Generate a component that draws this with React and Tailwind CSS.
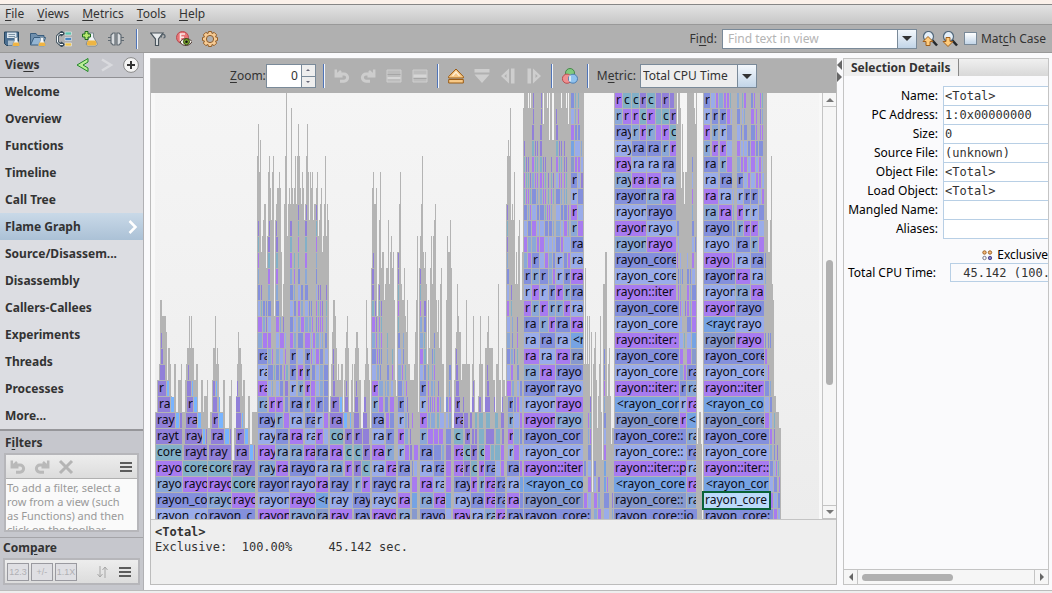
import React from "react";

const LEFT = 151;
const TOP = 93;
const ROW = 16;
const END = 519;

const COLORS = {
  a: "#8490dc",
  b: "#9aacea",
  c: "#a87bf0",
  d: "#82b0c8",
  e: "#8ba8d8",
  f: "#9180d9",
  g: "#76a3e3",
  h: "#78b4ff",
  i: "#8799ce",
};

const LABELS = {
  A: "rayon_core::job",
  B: "rayon_core::job",
  C: "rayon::iter::plumbing",
  D: "core::ops",
  E: "rayon_core::registry",
  F: "raytracer",
  G: "<rayon_core",
  I: "rayon_core::latch",
};

// Keeps only the letters that start inside a frame of the given width.
const fit = (label, width) => {
  let used = 1;
  let n = 0;
  while (n < label.length && used + 2 < width) {
    used += { r: 5, t: 4, i: 3, ":": 3, l: 3, _: 5, c: 6 }[label[n]] || 7;
    n += 1;
  }
  return label.slice(0, n);
};

// Stack outline: "x:row" starts a run whose top frame sits in that row.
const OUTLINE =
  "155:20 157:18 159:17 160:13 162:14 166:15 167:18 168:16 170:17 171:19 172:20 174:17 176:20 178:18 181:17 182:20 " +
  "185:18 186:17 187:16 189:14 190:16 191:14 192:16 194:18 196:17 198:20 201:18 203:20 204:19 207:18 208:21 " +
  "210:20 212:18 213:16 215:14 216:17 217:16 218:17 219:20 223:18 225:21 229:19 231:18 232:23 234:21 " +
  "236:19 237:17 238:15 239:16 241:17 242:19 243:18 245:21 248:19 250:22 252:20 " +
  "257:4 258:2 259:5 260:3 261:10 262:9 263:8 264:7 266:11 267:9 268:5 269:4 270:6 271:8 272:5 273:4 274:14 275:8 276:7 277:6 279:5 280:6 281:10 282:14 283:12 284:7 285:4 286:0 287:9 288:7 289:6 290:7 291:1 292:6 293:7 294:6 295:4 296:7 297:4 298:2 299:4 300:6 301:7 302:5 303:6 304:8 305:7 306:4 307:2 308:5 309:8 310:5 311:6 312:5 313:8 314:7 316:6 317:5 318:9 319:8 320:7 321:6 322:10 323:9 324:7 325:4 326:9 327:7 328:8 329:20 " +
  "330:19 331:17 332:15 333:13 335:14 336:16 337:18 338:17 339:18 341:17 343:20 344:18 345:16 346:15 347:14 348:16 349:20 351:18 352:17 353:20 354:17 355:16 356:15 358:16 359:18 361:21 363:20 364:18 365:17 366:13 367:16 368:17 369:18 370:21 " +
  "371:11 372:6 373:5 374:7 376:6 377:14 378:12 379:8 380:5 381:11 382:10 384:13 385:12 386:11 388:8 389:12 390:10 391:9 392:11 393:10 394:13 395:18 396:19 397:10 399:7 400:5 401:12 402:13 404:11 405:14 406:15 407:13 408:17 410:18 414:17 415:15 416:13 417:9 418:20 419:11 420:9 421:7 422:4 423:10 424:11 425:10 426:12 427:17 428:13 429:16 430:11 431:9 432:12 433:9 434:8 435:7 436:13 437:15 438:13 439:16 440:12 441:11 442:17 444:20 446:13 447:9 448:10 450:8 451:11 452:21 454:18 455:16 456:15 457:12 458:14 459:15 461:18 462:17 466:13 467:17 470:20 472:17 473:14 474:18 475:20 478:19 479:17 480:14 481:17 483:20 485:16 487:15 488:14 489:16 493:18 495:20 496:17 498:12 499:18 501:20 502:16 503:18 505:19 " +
  "506:7 507:4 508:3 509:4 510:1 511:8 512:7 513:8 514:5 515:12 516:10 517:12 518:9 519:8 520:13 522:10 523:1 524:0 528:1 529:0 530:1 531:0 543:2 544:0 547:1 548:0 549:3 550:0 552:3 554:0 561:1 562:0 566:1 567:0 568:2 569:0 " +
  "584:17 585:11 586:17 587:14 588:17 589:14 590:19 591:15 592:25 593:17 594:16 595:15 596:18 597:21 598:19 599:17 600:14 601:20 602:23 603:12 605:10 607:19 608:17 609:16 610:19 611:22 612:21 " +
  "614:0 677:2 678:0 680:1 681:6 682:2 683:5 684:7 685:5 687:0 694:1 695:2 696:0 697:22 698:21 699:20 701:22 702:27 703:0 767:8 768:10 770:8 771:4 772:12 773:13 774:19 776:20 779:21 781:27";

// Frames per row: "x-endColour"; an upper-case colour letter marks a labelled frame.
const FRAMES = [
  "533-534f 541-542f 571-574a 575-576d 578-579d 615-622C 623-631D 632-639D 640-646F 647-655D 656-661f 662-669F 670-674f 704-710A 711-715b 716-718c 719-723e 724-726c 727-729c 730-731d 737-739e 742-743d 744-746c 751-753a 754-755c 760-761c 762-763d",
  "533-534f 541-542f 556-557f 571-574b 575-576e 578-579c 615-622E 623-631C 632-639C 640-646D 647-655C 656-661d 662-669D 670-676F 704-710B 712-718A 720-726A 727-730c 731-732b 737-740a 742-743b 744-745e 751-754c 756-757c 760-761f 762-763e",
  "532-534f 540-542f 556-558f 571-574c 575-577a 578-580a 615-631A 632-639E 640-646C 647-655E 656-661c 662-669C 670-676D 704-710C 712-718E 720-726B 727-732a 737-740b 741-742a 744-747a 751-755a 756-757c 760-761c 762-763c",
  "524-525f 532-534d 535-536f 537-538f 540-542f 556-558d 559-560f 561-562f 564-565f 571-574g 575-580b 581-582e 615-631B 632-646A 647-661A 662-669E 670-676C 704-710E 712-718C 720-726C 727-732b 737-740c 741-743b 744-747b 748-750a 751-755c 756-758a 759-763a",
  "524-525d 526-527f 528-529f 532-534c 535-536d 537-538d 540-542d 543-544f 545-546f 551-552f 556-558c 559-560d 561-562d 564-565f 566-567f 571-574i 575-577c 578-580c 581-583b 615-631C 632-646B 647-661B 662-676A 692-693a 704-718A 720-726E 727-732c 737-740e 741-743c 744-747c 748-750b 751-755c 756-758b 759-761c 762-763b",
  "524-525c 526-527d 528-529d 530-531f 532-534e 535-536c 537-538c 540-542c 543-544c 545-546d 548-549f 551-552d 553-554f 556-558b 559-560c 561-562c 564-565c 566-567d 571-577A 578-580b 581-583f 615-631E 632-646C 647-661C 662-676B 692-693b 704-718B 720-732A 737-743A 744-747b 748-750c 751-755b 756-758c 759-761c 762-764b",
  "524-525d 526-527c 528-529c 530-531d 532-536a 537-538e 540-542e 543-544c 545-546c 548-549d 551-552c 553-554d 556-560a 561-562e 564-565e 566-567d 571-577B 578-583a 615-646A 647-661E 662-676C 692-693c 704-718C 719-732B 733-734b 737-743B 744-750A 751-758A 759-761b 762-764c",
  "298-299f 306-307f 316-317f 507-508f 524-527a 528-529e 530-531c 532-536b 537-539a 540-544a 545-546d 547-548c 549-550c 551-552e 556-560b 561-563a 564-567a 568-569c 571-577C 578-583b 615-646B 647-676A 692-693e 704-718E 719-732C 733-734e 737-743C 744-750B 751-758B 759-764a",
  "258-259f 269-270f 276-277f 290-292f 298-299d 305-307f 316-317d 507-508d 524-527b 528-531a 532-536c 537-539b 540-544b 545-548a 549-552a 553-554e 556-560e 561-563b 564-567c 568-569e 571-577E 578-583c 615-646C 647-676B 677-679a 692-694a 704-732A 733-735a 737-743E 744-750C 751-758C 759-764b",
  "258-259d 268-270f 276-278f 290-292d 298-299c 305-307d 316-317c 507-508f 524-527c 528-531e 532-536e 537-539c 540-544c 545-548b 549-552b 553-555b 556-560a 561-563c 564-570b 571-583A 615-646E 647-676C 678-679b 692-694b 695-696a 704-732B 733-735b 736-750A 751-758E 759-764c",
  "258-259c 268-270d 276-278d 290-292c 294-295d 298-299d 305-307c 316-317e 373-374f 398-399f 507-508e 524-527e 528-531c 532-539A 540-544b 545-548c 549-552e 553-555a 556-563B 564-567a 568-570c 571-583B 615-676A 677-678c 680-681b 687-688b 692-694c 704-732C 733-735c 736-750B 751-764A 765-766a",
  "258-259e 268-270c 276-278c 290-292e 294-295c 298-300a 305-307e 316-317a 372-374f 398-399f 420-421f 507-509a 524-531A 532-539E 540-548A 549-552e 553-555c 556-563B 564-570A 571-583C 615-676B 678-679a 680-681e 682-683a 687-689a 690-691a 692-695b 704-735A 736-750C 751-764B 765-766e",
  "258-260a 261-262f 268-270e 276-278e 290-293a 294-295e 298-300b 301-303a 305-308a 316-317b 318-319f 320-321f 326-327f 372-374f 379-380f 398-399d 420-421d 507-509b 511-512f 524-531B 532-539C 540-548B 549-555A 556-563C 564-570E 571-583A 615-676C 678-679c 680-681e 687-689c 690-691e 692-696a 704-735B 736-750E 751-764C 765-766b",
  "258-260b 261-262d 263-265a 266-267a 268-271a 276-279a 290-293b 294-296a 298-300c 301-303e 305-308b 309-310a 311-312a 316-317c 318-319d 320-321c 322-323f 326-327d 372-374d 375-376f 379-380d 381-382f 398-399c 420-421c 424-426f 507-509c 511-512d 524-531C 532-539E 540-548C 549-555E 556-563E 564-570C 571-583B 615-679A 680-681c 682-683b 685-686f 687-689c 690-691e 692-696c 704-735C 736-764A",
  "258-262c 263-265e 266-267f 268-271b 276-279c 280-281e 283-284f 290-293a 294-296b 298-300e 301-304c 305-308e 309-311e 312-313c 316-317a 318-319c 320-321c 322-323c 326-327e 372-375c 376-377f 379-380c 381-382d 398-399d 420-422e 424-426a 507-510b 512-513e 517-518f 524-539A 540-548E 549-555C 556-570A 571-583C 615-679B 680-682b 687-691a 692-696c 704-735G 736-764B",
  "161-162f 258-262e 263-267c 268-271c 276-279b 280-284c 285-286b 290-293c 294-296e 298-303a 305-310c 311-312b 313-315c 316-319e 320-321b 322-323e 325-327a 372-375e 376-377c 379-380e 381-382c 387-388d 398-400a 403-404e 420-423e 424-425d 434-435a 507-510e 512-513a 517-518c 524-539B 540-555A 556-570B 571-583G 615-679C 680-683b 684-685d 687-691b 692-696g 704-735I 736-764C 765-766a 768-769a 770-771a",
  "161-163f 258-267A 268-271e 272-273c 276-279e 280-283b 285-286c 290-296A 298-303b 305-310A 311-312c 313-315b 316-319c 320-323a 325-328b 333-334f 372-376a 377-378c 379-380a 381-382a 387-388e 392-393d 398-401b 403-404a 420-423c 424-426d 432-433a 434-435d 456-457f 507-510a 511-513e 514-515f 517-518d 524-539C 540-555B 556-570C 571-583I 604-605a 615-679A 680-683c 687-691c 692-696i 704-764A 765-767c",
  "160-165f 188-189f 258-267B 268-273a 274-275d 276-279a 280-282a 284-285c 286-288d 290-296A 298-303C 305-310A 312-315a 316-319b 320-323e 324-328a 333-334f 372-376b 377-379e 380-381a 387-389a 392-393c 398-401e 402-403c 405-406d 420-423b 424-426a 428-429d 432-433e 434-435c 449-451a 456-458f 487-488f 507-510b 511-513c 517-519a 524-539E 540-555C 556-583A 604-605a 615-679B 680-683e 684-686c 687-696A 704-764B 765-767b 768-769c",
  "158-166F 167-169h 187-191f 192-193h 213-215f 216-217h 237-238f 258-267C 268-271b 272-273e 276-279b 280-283a 285-288f 290-296B 298-303E 305-310C 311-315c 316-319b 320-323e 324-328a 333-335f 346-347f 356-357f 372-378C 379-383e 385-386e 387-389e 391-393b 398-402a 403-404b 406-407c 420-426A 428-429c 431-433e 434-435e 438-439f 449-450e 456-459f 473-474f 487-489f 507-511c 512-514e 517-519b 520-522a 524-555A 556-583B 604-605c 615-679C 680-686A 687-696E 704-764C 765-769a 770-771e",
  "158-170F 171-174h 187-193F 194-197h 213-217f 219-220h 236-240f 258-267E 269-275C 276-283C 285-288a 290-303A 305-310E 311-315c 316-323A 324-328a 331-339F 340-342h 345-348f 355-358f 364-366f 372-378E 379-383c 385-388a 390-394c 398-404A 405-406b 407-408f 420-426B 428-429c 430-431a 432-433c 434-435c 437-439c 440-441e 446-448a 449-451c 455-460F 463-464f 472-474f 479-481f 485-490f 494-495f 502-503f 508-513A 514-516a 517-519c 520-522b 524-555B 556-583C 590-591f 604-605e 615-679G 680-686B 687-696C 704-764G 765-769b 770-772a",
  "156-175F 176-179h 180-182f 186-197F 198-201h 212-218F 219-223h 236-241f 242-243h 258-275A 276-283E 284-289c 290-303B 305-315A 316-323B 324-328c 330-343F 344-347h 350-351h 354-359f 363-367f 372-384A 386-389c 390-394a 398-404B 405-407e 408-409f 412-413c 420-427C 428-430e 431-435e 437-439d 440-444b 446-448b 449-451e 454-463F 464-468f 470-472f 475-477d 479-483d 486-490d 495-498d 501-504f 508-513E 514-519b 520-522c 524-555C 556-583E 588-589c 590-591d 604-606a 615-679I 680-686C 687-696G 704-764I 765-769c 770-772b 774-775d",
  "156-182F 185-202F 203-205h 206-207f 211-224F 225-229h 230-231f 236-244F 245-248h 258-275B 276-288A 290-303C 305-315B 316-323C 324-328b 330-343D 345-352F 354-362F 363-369f 372-384B 386-394A 398-404C 405-408e 410-411f 420-427E 428-433c 434-438c 439-443c 446-451a 454-463D 465-470F 472-474f 475-477f 479-484d 486-494f 496-500d 502-504f 508-513C 514-519e 520-522a 524-583A 588-589e 590-591c 604-606b 614-686A 687-696E 704-769A 770-772c 774-775f",
  "156-182D 184-207F 209-231F 235-249F 250-253h 254-255f 258-275C 276-288E 290-303E 304-315C 316-328A 330-343C 345-352D 354-362D 363-370F 372-385C 386-394E 398-404B 405-409c 410-412f 414-418c 420-433A 434-441a 442-444e 446-451f 454-463C 464-470D 471-477F 479-484D 485-490c 491-494d 495-500d 501-504c 508-513B 514-519c 520-523b 524-583B 588-591a 604-606c 614-686B 687-696A 704-769B 770-772e 774-775a 777-778f",
  "156-182C 183-207D 208-231D 233-255F 258-275E 276-288C 290-315A 316-328B 330-343E 345-352C 354-361F 362-370D 372-385B 386-396C 398-410A 412-413a 414-417b 420-433B 434-444A 446-451c 454-463C 464-470F 471-477D 479-484C 485-495A 496-500b 501-504c 507-519A 520-522c 524-583C 584-586a 588-591b 594-596a 604-606g 614-686C 687-696B 704-769C 770-773a 774-775b 776-777c 778-779d",
  "156-182E 183-207C 208-231C 232-255D 258-289A 290-315B 316-328C 330-352A 354-361E 362-370C 372-396A 398-410B 412-417c 420-433C 434-444B 446-451c 454-470A 471-477C 479-484E 485-495C 496-505A 507-519B 520-523g 524-583G 588-591c 594-596b 598-600f 604-606g 607-608c 614-686G 687-696C 704-769G 770-773b 774-777a 779-780c",
  "156-207A 208-231E 232-255C 258-289B 290-315C 316-328G 330-352B 353-370A 372-396B 398-410C 412-417g 420-433E 434-445C 446-451g 454-470B 471-484A 485-495C 496-505A 507-519C 520-523a 524-583I 584-587c 588-591b 594-597c 598-600e 604-609a 612-613f 614-686I 687-696E 771-773c 774-777b 778-780a",
  "156-207B 208-255A 258-289C 290-315E 316-328I 330-352C 354-370A 372-396C 398-410E 412-417i 420-445A 446-451b 453-470C 471-484B 485-495E 496-505C 507-523A 524-591A 594-597e 598-601c 604-609b 612-613e 614-697A 704-773A 774-777c 778-780b",
];

function FlameGraph() {
  const runs = OUTLINE.split(" ").map((s) => s.split(":").map(Number));
  return (
    <svg width="671" height="426" viewBox="151 93 671 426" role="img" aria-label="Flame Graph" className="block shrink-0">
      <defs>
        <linearGradient id="paper" x1="0" y1="0" x2="0" y2="1">
          <stop offset="0" stopColor="#f5f5f5" />
          <stop offset="1" stopColor="#ececec" />
        </linearGradient>
      </defs>
      <rect x={LEFT} y={TOP} width="671" height="426" fill="#f8f8f8" />
      <rect x="155" y={TOP} width="664" height="426" fill="url(#paper)" />
      <g fill="#b4b4b4" shapeRendering="crispEdges">
        {runs.slice(0, -1).map(([x, row], i) => {
          const y = TOP - 1 + row * ROW;
          return row < 27 ? <rect key={x} x={x} y={y} width={runs[i + 1][0] - x} height={END - y} /> : null;
        })}
      </g>
      {FRAMES.map((line, row) =>
        line.split(" ").map((s) => {
          const [, x, end, code] = s.match(/(\d+)-(\d+)(\w)/);
          const y = TOP + row * ROW;
          const w = end - x;
          return (
            <svg key={row + s} x={x} y={y} width={w} height="15">
              <rect width={w} height="15" fill={COLORS[code.toLowerCase()]} />
              {LABELS[code] && (
                <text x={code === "G" ? 2 : 1} y="11" fontSize="12" fill="#0c0c14">
                  {fit(LABELS[code], w)}
                </text>
              )}
            </svg>
          );
        })
      )}
      <rect x="703" y="492" width="67" height="17" fill="#bcdafa" stroke="#0a6238" strokeWidth="2" />
      <svg x="704" y="493" width="65" height="15">
        <text x="1" y="11" fontSize="12" fill="#0c0c14">rayon_core</text>
      </svg>
    </svg>
  );
}

const Icon = ({ children }) => (
  <svg width="16" height="16" viewBox="0 0 16 16" fill="none" className="block shrink-0">
    {children}
  </svg>
);

const Flask = ({ x = 8, y = 6 }) => (
  <g transform={`translate(${x} ${y})`}>
    <path d="M2.5 .5h3v3l2 3.5c.6 1.500-.3 2.500-1.500 2.500h-4c-1.200 0-2-1-1.500-2.500l2-3.500z" fill="#f2f6fa" stroke="#8899a6" strokeWidth=".8" />
    <path d="M1.500 5.500h5l1 2c.2 1-.5 1.500-1.200 1.500H1.800C.9 9 .5 8.300.8 7.500z" fill="#f0b443" />
  </g>
);
const SaveIcon = () => (
  <Icon>
    <path d="M.5 1h14v13.500H2.500l-2-2z" fill="#4b6f91" stroke="#28465f" />
    <path d="M3 1.500h9.500V7H3z" fill="#dce6ee" />
    <path d="M4.500 3.500h6.500M4.500 5.500h6.500" stroke="#7d94a6" />
    <path d="M4 9.500h6v5H4z" fill="#a9bccb" />
    <Flask />
  </Icon>
);
const OpenIcon = () => (
  <Icon>
    <path d="M.5 14V2.500h5.500l1.500 2H14V7" fill="#6f8fad" stroke="#3a5d7d" />
    <path d="M.5 14 4 6.500h11.500L13 14z" fill="#94b5d3" stroke="#3a5d7d" />
    <Flask y={6} />
  </Icon>
);
const ConnectIcon = () => (
  <Icon>
    <path d="M7 2.500H4L1.500 5v6L4 13.500h3M4.500 .5l3 2-3 2M4.500 11.500l3 2-3 2" stroke="#394c59" strokeWidth="2.600" />
    <path d="M7 2.500H4L1.500 5v6L4 13.500h3" stroke="#f5f8fa" strokeWidth="1" />
    <path d="M9 1h6.500v3H9z" fill="#5bc1ad" stroke="#eee" strokeWidth=".6" />
    <path d="M9 6.500h6.500v3H9z" fill="#4a86c0" stroke="#eee" strokeWidth=".6" />
    <path d="M9 12h6.500v3H9z" fill="#edc24a" stroke="#eee" strokeWidth=".6" />
  </Icon>
);
const NewIcon = () => (
  <Icon>
    <path d="M7.500 2h4v4l3.500 6c.6 2-.5 3-2 3H6.500c-2 0-2.500-1.500-2-3l3-6z" fill="#eef2f5" stroke="#7d8a93" />
    <path d="M6 9.500h7.500l1 2.500c.4 1.500-.3 2.500-1.500 2.500H6.500C5 14.500 4.600 13.500 5 12z" fill="#edb544" />
    <path d="M3 .5h3V3h2.500v3H6v2.500H3V6H.5V3H3z" fill="#b6e86f" stroke="#1d6a1d" />
  </Icon>
);
const CompareIcon = () => (
  <Icon>
    <path d="M7 2v12H5l-2-2V4l2-2zM9 2v12h2l2-2V4l-2-2zM0 6.500h3M0 9.500h3M13 6.500h3M13 9.500h3" fill="#d9dcdf" stroke="#606a72" strokeWidth="1.200" />
  </Icon>
);
const FilterIcon = () => (
  <Icon>
    <path d="M.5 2H13L8.500 8v6.500h-3V8z" fill="#e8ebed" stroke="#4a555d" strokeWidth="1.200" />
    <path d="M11.500 6.500c-1.500-3 3-4.500 3.500-1.500.2 1.500-1 2-1.500 1.500" stroke="#59656e" strokeWidth="1.400" />
  </Icon>
);
const EyeIcon = () => (
  <Icon>
    <circle cx="6.500" cy="6.500" r="6" fill="#e77476" stroke="#b94b50" />
    <path d="M4.500 10V3h4.500M4.500 6.300h3.500" stroke="#fbe6e6" strokeWidth="1.600" />
    <path d="M4 11c3-4.500 9-4.500 12-.5-2 5-9.500 5.500-12 .5z" fill="#f4f4ec" stroke="#4c3430" />
    <circle cx="10.500" cy="10.700" r="3" fill="#7da832" stroke="#38500f" />
    <circle cx="10.500" cy="10.700" r="1.300" fill="#111" />
  </Icon>
);
const GearIcon = () => (
  <Icon>
    <path d="M6.500 .5h3l.5 2 2.200-1.100 2.400 2.400L13.500 6l2 .5v3l-2 .5 1.100 2.200-2.400 2.400L10 13.500l-.5 2h-3l-.5-2-2.200 1.100-2.400-2.400L2.500 10l-2-.5v-3l2-.5-1.100-2.200 2.400-2.400L6 2.500z" fill="#f6cb94" stroke="#925e29" strokeLinejoin="round" />
    <circle cx="8" cy="8" r="3.600" fill="#b0b0b0" stroke="#925e29" />
  </Icon>
);
const FindIcon = ({ down }) => (
  <Icon>
    <path d="m10 9 5 5.500" stroke="#24282c" strokeWidth="2.500" />
    <circle cx="6.500" cy="5.500" r="5" fill="#e4eff9" stroke="#53687a" strokeWidth="1.200" />
    <path d={down ? "M4 6.500h4v4h3L6 15.500 1 10.500h3z" : "M4 14.500h4v-4h3L6 5.500 1 10.500h3z"} fill="#ffcc7d" stroke="#a1601c" />
  </Icon>
);
const UndoIcon = ({ redo, tone = "#cdcdcd" }) => (
  <Icon>
    <g transform={redo ? "translate(16 0) scale(-1 1)" : undefined} stroke={tone}>
      <path d="M3.500 6H10a3.600 3.600 0 0 1 0 7.200H6" strokeWidth="3" />
      <path d="M1.800 1.500v6.700h6.700M2 8l5-5" strokeWidth="2.500" />
    </g>
  </Icon>
);
const ListIcon = ({ low }) => (
  <Icon>
    <path d="M1 2h14v12H1z" fill="#bdbdbd" stroke="#cecece" />
    <path d={low ? "M1.500 6.500h13v3h-13z" : "M1.500 9h13v2h-13z"} fill="#d6d6d6" />
    <path d={low ? "M1.500 10.500h13" : "M1.500 6.500h13"} stroke="#a6a6a6" />
  </Icon>
);
const UpIcon = () => (
  <Icon>
    <path d="m8 1 7.300 7.500v1.500H.7V8.500z" fill="#f7c987" stroke="#9a5c15" />
    <path d="m4.500 8 3.500-4 3.500 4" stroke="#fff1d8" strokeWidth="1.200" />
    <path d="M.7 11.500h14.600v3.500H.7z" fill="#f7c987" stroke="#9a5c15" />
  </Icon>
);
const NavIcon = ({ kind }) => (
  <Icon>
    {kind === "down" && <path d="M.5 1h15v3.500H.5zM.5 6.500h15L8 15z" fill="#cecece" />}
    {kind === "left" && <path d="M11 .5h3.500v15H11zM9 .5v15L1 8zM6.500 6v4L4.300 8z" fill="#cecece" fillRule="evenodd" />}
    {kind === "right" && <path d="M1.500 .5H5v15H1.500zM7 .5v15L15 8zM9.500 6v4l2.200-2z" fill="#cecece" fillRule="evenodd" />}
  </Icon>
);
const ColorsIcon = () => (
  <Icon>
    <circle cx="8" cy="5" r="4.500" fill="#80c97f" stroke="#46884a" />
    <circle cx="5" cy="10.700" r="4.600" fill="#ef9090" stroke="#b84e52" />
    <circle cx="11" cy="10.700" r="4.500" fill="#90c2ee" stroke="#4e7db0" />
    <path d="M8 7.500v6" stroke="#f6f6f6" strokeWidth="1.500" />
  </Icon>
);
const Bars = () => (
  <svg width="14" height="12" viewBox="0 0 14 12" className="block">
    <path d="M1 2h12M1 6h12M1 10h12" stroke="#5c5c5c" strokeWidth="2" />
  </svg>
);
const Tri = ({ dir = "down", small }) => {
  const d = { down: "M0 0h10L5 5z", up: "M0 5h10L5 0z", left: "M5 0v10L0 5z", right: "M0 0v10l5-5z" }[dir];
  const tall = dir === "left" || dir === "right";
  const long = small ? 8 : 10;
  const short = small ? 4 : 5;
  return (
    <svg width={tall ? short : long} height={tall ? long : short} viewBox={tall ? "0 0 5 10" : "0 0 10 5"} className="block fill-current">
      <path d={d} />
    </svg>
  );
};

const Btn = ({ label, className = "", children }) => (
  <button type="button" aria-label={label} className={`flex shrink-0 items-center justify-center ${className}`}>
    {children}
  </button>
);
const Sep = ({ margin = "mx-[9px]" }) => <div className={`h-6 w-[2px] shrink-0 border-l border-[#4f74b8] bg-[#f2f6fc] ${margin}`} />;
const U = ({ children }) => <span className="underline underline-offset-2">{children}</span>;

const VIEWS = ["Welcome", "Overview", "Functions", "Timeline", "Call Tree", "Flame Graph", "Source/Disassem...", "Disassembly", "Callers-Callees", "Experiments", "Threads", "Processes", "More..."];
const DETAILS = [
  ["Name:", "<Total>"],
  ["PC Address:", "1:0x00000000"],
  ["Size:", "0"],
  ["Source File:", "(unknown)"],
  ["Object File:", "<Total>"],
  ["Load Object:", "<Total>"],
  ["Mangled Name:", ""],
  ["Aliases:", ""],
];

function Sidebar() {
  return (
    <aside className="flex w-36 shrink-0 flex-col border-r border-[#b0b0b4] bg-[#c6c7cd] font-bold">
      <div className="flex h-[25px] shrink-0 items-center border-b border-[#909094] pl-[5px] pr-1">
        <h2 className="flex-1">Vie<U>w</U>s</h2>
        <Btn label="Back" className="mr-2">
          <Icon><path d="M13 1.500 2 8l11 6.500v-3.500L8 8l5-3z" fill="#b9ee95" stroke="#23872b" /></Icon>
        </Btn>
        <Btn label="Forward" className="mr-2">
          <Icon><path d="M3 2.500 12 8l-9 5.500" stroke="#d9dade" strokeWidth="2.500" /></Icon>
        </Btn>
        <Btn label="Add view">
          <Icon>
            <circle cx="8" cy="8" r="7.400" fill="#f4f4f4" stroke="#888" />
            <path d="M8 4v8M4 8h8" stroke="#333" strokeWidth="2" />
          </Icon>
        </Btn>
      </div>
      <nav className="shrink-0 border-b-2 border-[#96969a] bg-[#dcdde2]">
        {VIEWS.map((v) => (
          <a
            key={v}
            href={"#" + v}
            className={`flex h-[27px] items-center justify-between pl-[5px] pr-[5px] ${v === "Flame Graph" ? "bg-linear-to-b from-[#c9d9e8] to-[#abc1d6]" : ""}`}
          >
            {v}
            {v === "Flame Graph" && (
              <svg width="10" height="14" viewBox="0 0 10 14" fill="none"><path d="m1.500 1 6 6-6 6" stroke="#fff" strokeWidth="2.500" /></svg>
            )}
          </a>
        ))}
      </nav>
      <section className="flex h-[107px] shrink-0 flex-col border-b border-[#a4a4a8] px-1 pb-[5px]">
        <h2 className="h-[22px] shrink-0 pl-px pt-[2px] leading-5">F<U>i</U>lters</h2>
        <div className="flex min-h-0 flex-1 flex-col border-2 border-[#b6b6ba] bg-[#fafafa]">
          <div className="flex h-6 shrink-0 items-center gap-2 border-b border-[#b0b0b0] bg-linear-to-b from-[#ededed] to-[#dcdcdc] px-1">
            <Btn label="Undo filter"><UndoIcon tone="#b9b9b9" /></Btn>
            <Btn label="Redo filter"><UndoIcon redo tone="#b9b9b9" /></Btn>
            <Btn label="Remove filter" className="mr-auto">
              <Icon><path d="m2 2 12 12M14 2 2 14" stroke="#b4b4b4" strokeWidth="3" /></Icon>
            </Btn>
            <Btn label="Filter menu"><Bars /></Btn>
          </div>
          <p className="min-h-0 flex-1 overflow-hidden pl-px pr-2 pt-[2px] text-[11px] font-normal leading-[14px] text-[#999]">
            To add a filter, select a row from a view (such as Functions) and then click on the toolbar
          </p>
        </div>
      </section>
      <section className="min-h-0 flex-1 px-[3px]">
        <h2 className="h-5 leading-5">Com<U>p</U>are</h2>
        <div className="flex h-[27px] items-center gap-[2px] border-2 border-[#b6b6ba] bg-linear-to-b from-[#ededed] to-[#dcdcdc] px-[2px]">
          {["12.3", "+/-", "1.1X"].map((t) => (
            <button key={t} type="button" className="flex h-[18px] w-[22px] items-center justify-center border border-[#9a9aa0] bg-[#dfdfe3] font-['Liberation_Sans',sans-serif] text-[9px] font-normal text-[#b0b0b4]">
              {t}
            </button>
          ))}
          <Btn label="Sort" className="ml-auto mr-2">
            <svg width="11" height="12" viewBox="0 0 11 12" fill="none"><path d="M3 0v11M.5 8 3 11l2.500-3M8 12V1M5.500 4 8 1l2.500 3" stroke="#a6a6a6" /></svg>
          </Btn>
          <Btn label="Compare menu" className="mr-1"><Bars /></Btn>
        </div>
      </section>
    </aside>
  );
}

function GraphToolbar() {
  return (
    <div className="flex h-[34px] shrink-0 items-center bg-[#b0b0b0] pl-[79px]">
      <label htmlFor="zoom"><U>Z</U>oom:</label>
      <div className="flex h-6 w-[50px] shrink-0 border border-[#7a8a99] bg-white">
        <input id="zoom" defaultValue="0" className="w-[34px] min-w-0 bg-white pr-[3px] text-right outline-none" />
        <div className="flex flex-1 flex-col border-l border-[#7a8a99] bg-[#eee] text-[#667]">
          <Btn label="Zoom in" className="flex-1 border-b border-[#7a8a99]"><svg width="4" height="2" className="fill-current"><path d="M0 2 2 0l2 2z" /></svg></Btn>
          <Btn label="Zoom out" className="flex-1"><svg width="4" height="2" className="fill-current"><path d="m0 0 2 2 2-2z" /></svg></Btn>
        </div>
      </div>
      <Sep margin="ml-[7px] mr-[9px]" />
      <div className="flex gap-[10px]">
        <Btn label="Undo"><UndoIcon /></Btn>
        <Btn label="Redo"><UndoIcon redo /></Btn>
        <Btn label="Expand"><ListIcon /></Btn>
        <Btn label="Collapse"><ListIcon low /></Btn>
      </div>
      <Sep />
      <div className="flex gap-[10px]">
        <Btn label="Up"><UpIcon /></Btn>
        <Btn label="Down"><NavIcon kind="down" /></Btn>
        <Btn label="Previous"><NavIcon kind="left" /></Btn>
        <Btn label="Next"><NavIcon kind="right" /></Btn>
      </div>
      <Sep />
      <Btn label="Function colors"><ColorsIcon /></Btn>
      <Sep margin="ml-[9px] mr-2" />
      <label htmlFor="metric" className="mr-1">M<U>e</U>tric:</label>
      <div className="relative h-6 w-[117px] shrink-0">
        <select id="metric" className="h-full w-full appearance-none border border-[#7a8a99] bg-[#eee] pl-[2px] text-[#333] outline-none">
          <option>Total CPU Time</option>
        </select>
        <span className="pointer-events-none absolute inset-y-0 right-0 flex w-5 items-center justify-center border border-[#7a8a99] bg-linear-to-b from-[#f4f8fc] to-[#c2d5e8]"><Tri /></span>
      </div>
    </div>
  );
}

export default function App() {
  return (
    <div className="flex h-screen min-w-0 flex-col overflow-hidden bg-[#fafafc] font-['Noto_Sans','Open_Sans',sans-serif] text-[12px] leading-4 text-[#333]">
      <div className="h-[5px] shrink-0 border-b border-[#868686] bg-[#fbf1ea]" />
      <nav className="flex h-5 shrink-0 items-center gap-[13px] border-b border-[#999] bg-linear-to-b from-[#e3e3e3] to-[#c6c6c6] px-[5px] pb-[2px]">
        {[["F", "ile"], ["V", "iews"], ["M", "etrics"], ["T", "ools"], ["H", "elp"]].map(([key, rest]) => (
          <button key={key} type="button"><U>{key}</U>{rest}</button>
        ))}
      </nav>
      <div className="flex h-7 shrink-0 items-center border-b border-[#999] bg-[#b0b0b0] pl-1 pr-[6px]">
        <div className="flex gap-[10px]">
          <Btn label="Save"><SaveIcon /></Btn>
          <Btn label="Open"><OpenIcon /></Btn>
          <Btn label="Connect"><ConnectIcon /></Btn>
          <Btn label="Profile"><NewIcon /></Btn>
          <Btn label="Compare"><CompareIcon /></Btn>
        </div>
        <div className="mx-3 h-5 w-[2px] border-l border-[#4f74b8] bg-[#f2f6fc]" />
        <div className="flex flex-1 gap-[10px]">
          <Btn label="Filter"><FilterIcon /></Btn>
          <Btn label="View mode"><EyeIcon /></Btn>
          <Btn label="Settings"><GearIcon /></Btn>
        </div>
        <label htmlFor="find" className="mr-[5px]">Fi<U>n</U>d:</label>
        <div className="flex h-5 w-[195px] shrink-0 border border-[#7a8a99] bg-white">
          <input id="find" placeholder="Find text in view" className="min-w-0 flex-1 bg-white pl-[5px] outline-none placeholder:text-[#b4b4b4]" />
          <Btn label="Search history" className="w-[19px] border-l border-[#7a8a99] bg-linear-to-b from-[#f4f8fc] to-[#c2d5e8]"><Tri /></Btn>
        </div>
        <Btn label="Find previous" className="ml-[5px]"><FindIcon /></Btn>
        <Btn label="Find next" className="ml-1"><FindIcon down /></Btn>
        <input id="case" type="checkbox" className="ml-[6px] size-[13px] appearance-none border border-[#7a8a99] bg-linear-to-b from-white to-[#c2d5e8]" />
        <label htmlFor="case" className="ml-1 whitespace-nowrap">Mat<U>c</U>h Case</label>
      </div>

      <div className="flex min-h-0 flex-1">
        <Sidebar />
        <main className="ml-[6px] mt-[5px] mb-[5px] flex min-w-0 flex-1 flex-col border border-[#bcbcbc] bg-[#eee]">
          <GraphToolbar />
          <div className="flex min-h-0 flex-1 overflow-hidden">
            <div className="min-w-0 flex-1 overflow-hidden bg-[#f5f5f5]"><FlameGraph /></div>
            <div className="flex w-[14px] shrink-0 flex-col items-center border-l border-[#c4c4c4] bg-[#f6f6f6] text-[#777]">
              <div className="flex h-[14px] w-full items-center justify-center border-b border-[#c4c4c4]"><Tri dir="up" small /></div>
              <div className="flex w-full flex-1 flex-col items-center">
                <div className="flex-[153]" />
                <div className="w-[7px] flex-[125] rounded-sm bg-[#b0b0b0]" />
                <div className="flex-[120]" />
              </div>
              <div className="flex h-[14px] w-full items-center justify-center border-y border-[#c4c4c4]"><Tri small /></div>
            </div>
          </div>
          <pre className="h-[65px] shrink-0 border-t border-[#c4c4c4] pl-1 pt-[5px] font-['DejaVu_Sans_Mono',monospace] text-[12px] leading-[15px]">
            <b>{"<Total>"}</b>{"\nExclusive:  100.00%     45.142 sec."}
          </pre>
        </main>
        <div className="flex w-[6px] shrink-0 flex-col gap-[2px] pt-[7px] text-[#666]">
          <Tri dir="left" />
          <Tri dir="right" />
        </div>
        <aside className="mr-[3px] mt-[5px] mb-[5px] flex w-[206px] shrink-0 flex-col overflow-hidden border border-[#c4c4c4] bg-[#fafafc]">
          <div className="flex h-[17px] shrink-0 bg-linear-to-b from-[#f0f0f0] to-[#d8d8d8]">
            <h2 className="border-r border-[#888] bg-[#eee] pl-[7px] pr-2 pt-px font-bold">Selection Details</h2>
          </div>
          <div className="min-h-0 flex-1 overflow-hidden pt-[10px]">
            {DETAILS.map(([label, value]) => (
              <div key={label} className="flex h-[19px] items-center">
                <label htmlFor={label} className="w-[94px] shrink-0 whitespace-nowrap text-right text-black">{label}</label>
                <input
                  id={label}
                  readOnly
                  defaultValue={value}
                  className="ml-[5px] h-[19px] min-w-0 flex-1 border border-r-0 border-b-0 border-[#b8cfe5] bg-white pl-px font-['DejaVu_Sans_Mono',monospace] outline-none"
                />
              </div>
            ))}
            <div className="ml-[99px] border-t border-[#b8cfe5]" />
            <div className="mt-2 flex items-center justify-end gap-1 text-black">
              <svg width="11" height="11" viewBox="0 0 11 11" fill="none">
                <circle cx="2.500" cy="2.500" r="1.700" fill="#f6b877" stroke="#9a6228" />
                <circle cx="8" cy="2.500" r="1.700" fill="#f6b877" stroke="#9a6228" />
                <circle cx="2.500" cy="8" r="1.700" stroke="#78788c" />
                <circle cx="8" cy="8" r="1.700" fill="#7e7ac4" stroke="#504a90" />
              </svg>
              Exclusive
            </div>
            <div className="flex h-[19px] items-center">
              <label htmlFor="total" className="w-[98px] shrink-0 whitespace-nowrap pl-1 text-black">Total CPU Time:</label>
              <input id="total" readOnly defaultValue=" 45.142 (100.00%)" className="ml-2 h-[19px] min-w-0 flex-1 border border-r-0 border-[#b8cfe5] bg-[#fafafc] pl-[5px] font-['DejaVu_Sans_Mono',monospace] outline-none" />
            </div>
          </div>
          <div className="flex h-[15px] shrink-0 items-center border-t border-[#c4c4c4] bg-[#f6f6f6] text-[#666]">
            <div className="flex h-full w-[14px] items-center justify-center border-r border-[#c4c4c4]"><Tri dir="left" small /></div>
            <div className="ml-1 h-[7px] w-[91px] rounded-sm bg-[#b0b0b0]" />
            <div className="ml-auto flex h-full w-[14px] items-center justify-center border-l border-[#c4c4c4]"><Tri dir="right" small /></div>
          </div>
        </aside>
      </div>
      <div className="h-[3px] shrink-0 border-t border-[#bbb] bg-[#eee]" />
    </div>
  );
}
